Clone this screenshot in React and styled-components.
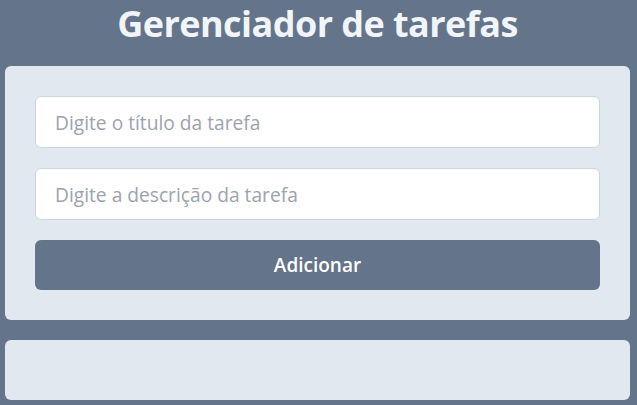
import React from "react";
import styled, { createGlobalStyle } from "styled-components";

const Global = createGlobalStyle`
  html, body { margin: 0; padding: 0; background: #64748b; }
  body { font-family: "Open Sans", "Noto Sans", sans-serif; }
  * { box-sizing: border-box; }
`;

const Page = styled.div`
  min-height: 405px;
  padding: 0 7px 0 5px;
  display: flex;
  flex-direction: column;
  gap: 20px;
`;

const Title = styled.h1`
  margin: 0;
  height: 46px;
  display: flex;
  align-items: flex-start;
  justify-content: center;
  color: #f1f5f9;
  font-size: 36px;
  font-weight: 700;
  line-height: 48px;
  letter-spacing: -0.55px;
`;

const Panel = styled.div`
  background: #e2e8f0;
  border-radius: 6px;
  padding: 30px;
  display: flex;
  flex-direction: column;
  gap: 20px;
  min-height: ${(p) => p.$minH || 0}px;
`;

const Input = styled.input`
  height: 52px;
  width: 100%;
  border: 1px solid #cbd5e1;
  border-radius: 6px;
  background: #ffffff;
  padding: 0 19px;
  font-family: inherit;
  font-size: 19.2px;
  color: #334155;
  outline: none;
  &::placeholder { color: #9ca3af; }
`;

const Button = styled.button`
  height: 50px;
  border: none;
  border-radius: 6px;
  background: #64748b;
  color: #ffffff;
  font-family: inherit;
  font-size: 19px;
  font-weight: 600;
  cursor: pointer;
`;

export default function App() {
  return (
    <>
      <Global />
      <Page>
        <Title>Gerenciador de tarefas</Title>
        <Panel>
          <Input placeholder="Digite o título da tarefa" />
          <Input placeholder="Digite a descrição da tarefa" />
          <Button>Adicionar</Button>
        </Panel>
        <Panel $minH={60} />
      </Page>
    </>
  );
}
